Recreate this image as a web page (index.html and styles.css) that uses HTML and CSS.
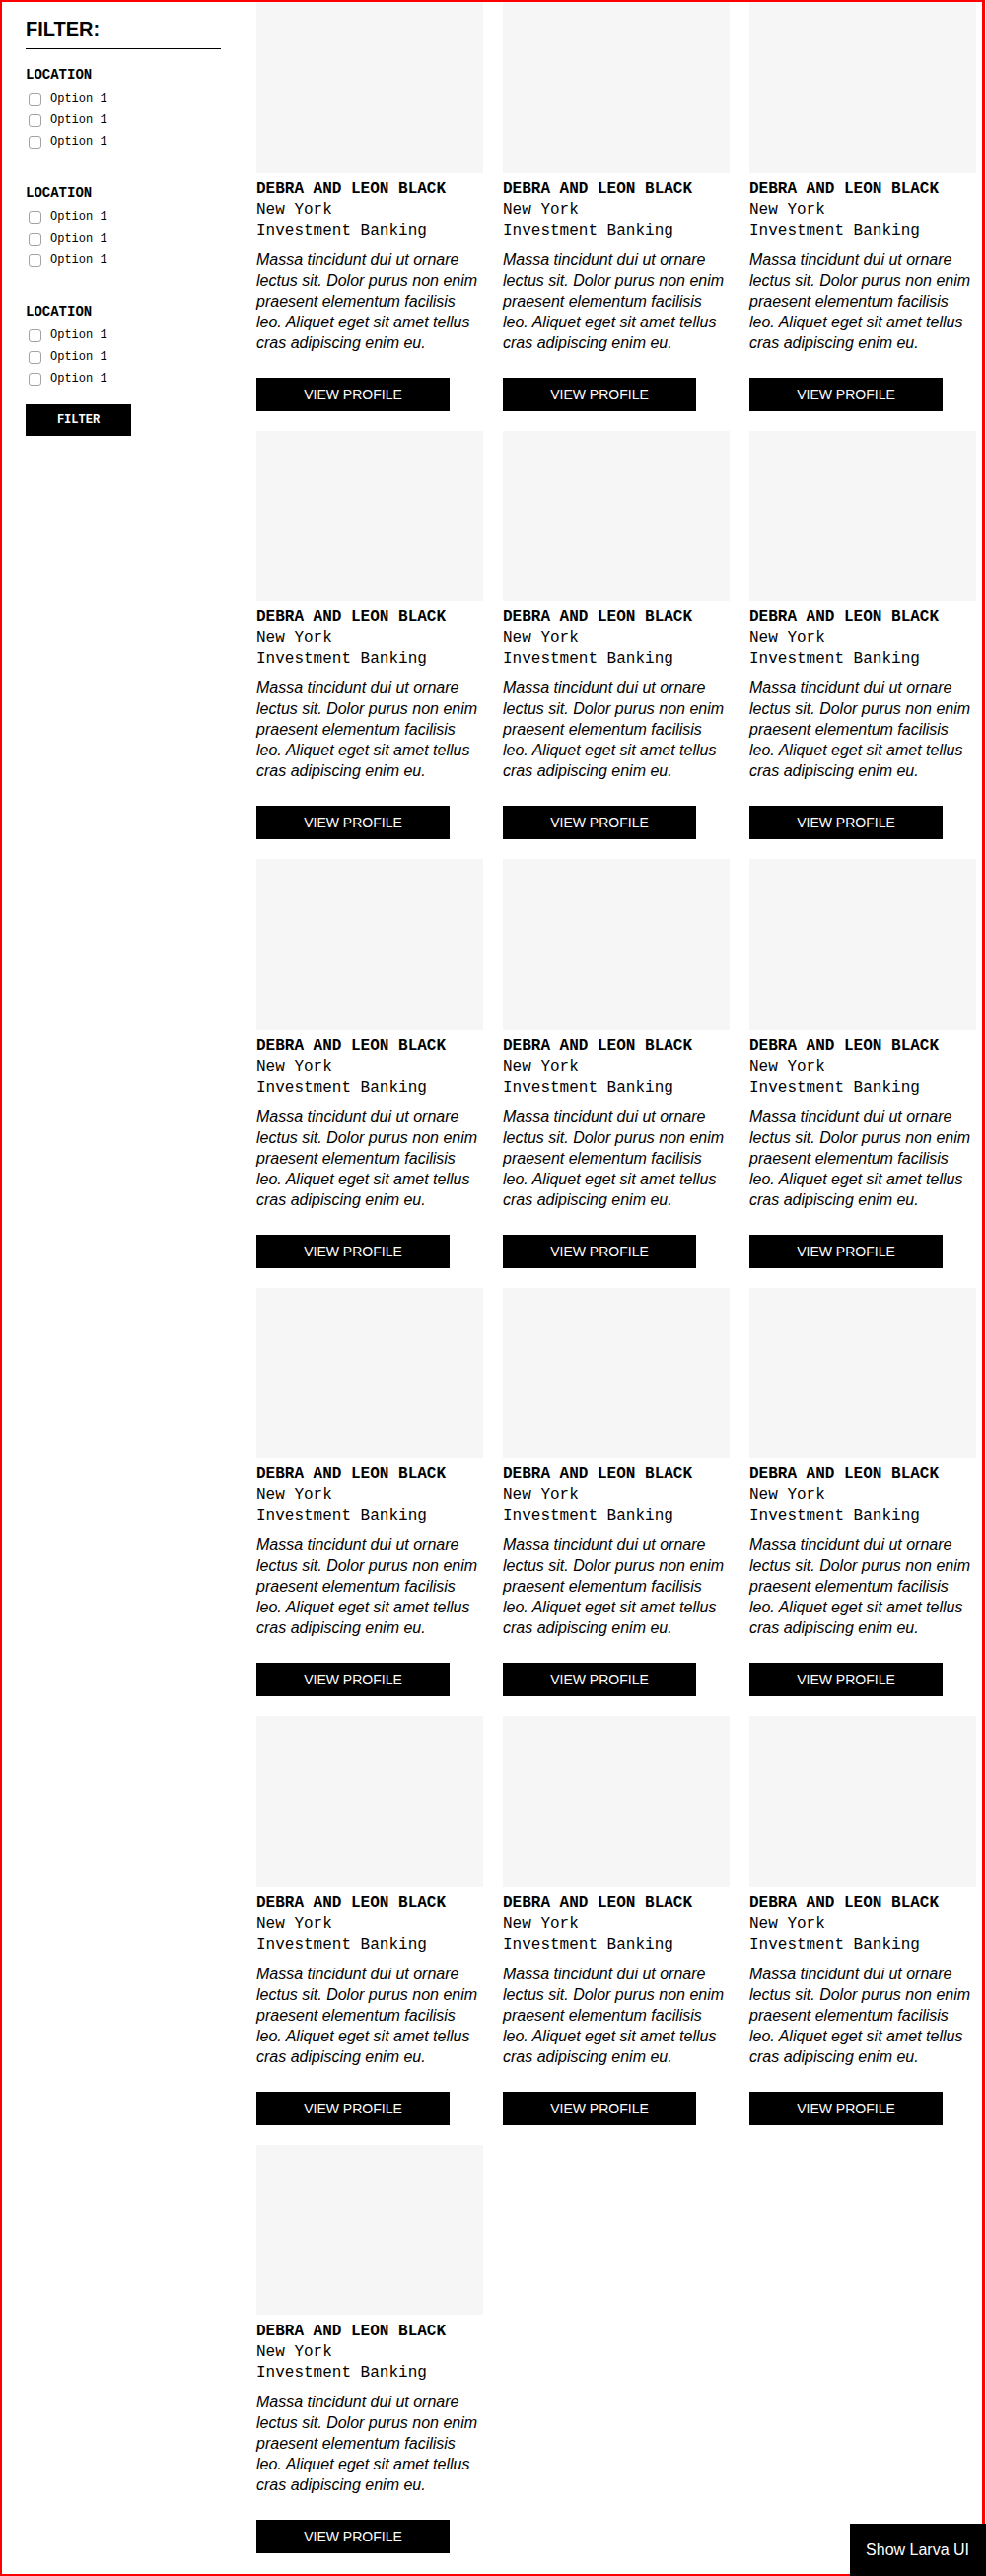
FILE: index.html
```html
<!DOCTYPE html>
<html lang="en">
<head>
<meta charset="utf-8">
<title>Profiles</title>
<link rel="stylesheet" href="styles.css">
</head>
<body>
<div class="page">
  <aside class="sidebar">
    <h2 class="sidebar-title">FILTER:</h2>
    <div class="group">
      <h3 class="group-title">LOCATION</h3>
      <label class="opt"><input type="checkbox" class="cb"><span>Option 1</span></label>
      <label class="opt"><input type="checkbox" class="cb"><span>Option 1</span></label>
      <label class="opt"><input type="checkbox" class="cb"><span>Option 1</span></label>
    </div>
    <div class="group">
      <h3 class="group-title">LOCATION</h3>
      <label class="opt"><input type="checkbox" class="cb"><span>Option 1</span></label>
      <label class="opt"><input type="checkbox" class="cb"><span>Option 1</span></label>
      <label class="opt"><input type="checkbox" class="cb"><span>Option 1</span></label>
    </div>
    <div class="group">
      <h3 class="group-title">LOCATION</h3>
      <label class="opt"><input type="checkbox" class="cb"><span>Option 1</span></label>
      <label class="opt"><input type="checkbox" class="cb"><span>Option 1</span></label>
      <label class="opt"><input type="checkbox" class="cb"><span>Option 1</span></label>
    </div>
    <button class="filter-btn" type="button">FILTER</button>
  </aside>

  <main class="grid">
    <article class="card"><div class="thumb"></div><h4 class="name">DEBRA AND LEON BLACK</h4><div class="meta">New York</div><div class="meta">Investment Banking</div><p class="desc">Massa tincidunt dui ut ornare lectus sit. Dolor purus non enim praesent elementum facilisis leo. Aliquet eget sit amet tellus cras adipiscing enim eu.</p><button class="profile-btn" type="button">VIEW PROFILE</button></article>
    <article class="card"><div class="thumb"></div><h4 class="name">DEBRA AND LEON BLACK</h4><div class="meta">New York</div><div class="meta">Investment Banking</div><p class="desc">Massa tincidunt dui ut ornare lectus sit. Dolor purus non enim praesent elementum facilisis leo. Aliquet eget sit amet tellus cras adipiscing enim eu.</p><button class="profile-btn" type="button">VIEW PROFILE</button></article>
    <article class="card"><div class="thumb"></div><h4 class="name">DEBRA AND LEON BLACK</h4><div class="meta">New York</div><div class="meta">Investment Banking</div><p class="desc">Massa tincidunt dui ut ornare lectus sit. Dolor purus non enim praesent elementum facilisis leo. Aliquet eget sit amet tellus cras adipiscing enim eu.</p><button class="profile-btn" type="button">VIEW PROFILE</button></article>
    <article class="card"><div class="thumb"></div><h4 class="name">DEBRA AND LEON BLACK</h4><div class="meta">New York</div><div class="meta">Investment Banking</div><p class="desc">Massa tincidunt dui ut ornare lectus sit. Dolor purus non enim praesent elementum facilisis leo. Aliquet eget sit amet tellus cras adipiscing enim eu.</p><button class="profile-btn" type="button">VIEW PROFILE</button></article>
    <article class="card"><div class="thumb"></div><h4 class="name">DEBRA AND LEON BLACK</h4><div class="meta">New York</div><div class="meta">Investment Banking</div><p class="desc">Massa tincidunt dui ut ornare lectus sit. Dolor purus non enim praesent elementum facilisis leo. Aliquet eget sit amet tellus cras adipiscing enim eu.</p><button class="profile-btn" type="button">VIEW PROFILE</button></article>
    <article class="card"><div class="thumb"></div><h4 class="name">DEBRA AND LEON BLACK</h4><div class="meta">New York</div><div class="meta">Investment Banking</div><p class="desc">Massa tincidunt dui ut ornare lectus sit. Dolor purus non enim praesent elementum facilisis leo. Aliquet eget sit amet tellus cras adipiscing enim eu.</p><button class="profile-btn" type="button">VIEW PROFILE</button></article>
    <article class="card"><div class="thumb"></div><h4 class="name">DEBRA AND LEON BLACK</h4><div class="meta">New York</div><div class="meta">Investment Banking</div><p class="desc">Massa tincidunt dui ut ornare lectus sit. Dolor purus non enim praesent elementum facilisis leo. Aliquet eget sit amet tellus cras adipiscing enim eu.</p><button class="profile-btn" type="button">VIEW PROFILE</button></article>
    <article class="card"><div class="thumb"></div><h4 class="name">DEBRA AND LEON BLACK</h4><div class="meta">New York</div><div class="meta">Investment Banking</div><p class="desc">Massa tincidunt dui ut ornare lectus sit. Dolor purus non enim praesent elementum facilisis leo. Aliquet eget sit amet tellus cras adipiscing enim eu.</p><button class="profile-btn" type="button">VIEW PROFILE</button></article>
    <article class="card"><div class="thumb"></div><h4 class="name">DEBRA AND LEON BLACK</h4><div class="meta">New York</div><div class="meta">Investment Banking</div><p class="desc">Massa tincidunt dui ut ornare lectus sit. Dolor purus non enim praesent elementum facilisis leo. Aliquet eget sit amet tellus cras adipiscing enim eu.</p><button class="profile-btn" type="button">VIEW PROFILE</button></article>
    <article class="card"><div class="thumb"></div><h4 class="name">DEBRA AND LEON BLACK</h4><div class="meta">New York</div><div class="meta">Investment Banking</div><p class="desc">Massa tincidunt dui ut ornare lectus sit. Dolor purus non enim praesent elementum facilisis leo. Aliquet eget sit amet tellus cras adipiscing enim eu.</p><button class="profile-btn" type="button">VIEW PROFILE</button></article>
    <article class="card"><div class="thumb"></div><h4 class="name">DEBRA AND LEON BLACK</h4><div class="meta">New York</div><div class="meta">Investment Banking</div><p class="desc">Massa tincidunt dui ut ornare lectus sit. Dolor purus non enim praesent elementum facilisis leo. Aliquet eget sit amet tellus cras adipiscing enim eu.</p><button class="profile-btn" type="button">VIEW PROFILE</button></article>
    <article class="card"><div class="thumb"></div><h4 class="name">DEBRA AND LEON BLACK</h4><div class="meta">New York</div><div class="meta">Investment Banking</div><p class="desc">Massa tincidunt dui ut ornare lectus sit. Dolor purus non enim praesent elementum facilisis leo. Aliquet eget sit amet tellus cras adipiscing enim eu.</p><button class="profile-btn" type="button">VIEW PROFILE</button></article>
    <article class="card"><div class="thumb"></div><h4 class="name">DEBRA AND LEON BLACK</h4><div class="meta">New York</div><div class="meta">Investment Banking</div><p class="desc">Massa tincidunt dui ut ornare lectus sit. Dolor purus non enim praesent elementum facilisis leo. Aliquet eget sit amet tellus cras adipiscing enim eu.</p><button class="profile-btn" type="button">VIEW PROFILE</button></article>
    <article class="card"><div class="thumb"></div><h4 class="name">DEBRA AND LEON BLACK</h4><div class="meta">New York</div><div class="meta">Investment Banking</div><p class="desc">Massa tincidunt dui ut ornare lectus sit. Dolor purus non enim praesent elementum facilisis leo. Aliquet eget sit amet tellus cras adipiscing enim eu.</p><button class="profile-btn" type="button">VIEW PROFILE</button></article>
    <article class="card"><div class="thumb"></div><h4 class="name">DEBRA AND LEON BLACK</h4><div class="meta">New York</div><div class="meta">Investment Banking</div><p class="desc">Massa tincidunt dui ut ornare lectus sit. Dolor purus non enim praesent elementum facilisis leo. Aliquet eget sit amet tellus cras adipiscing enim eu.</p><button class="profile-btn" type="button">VIEW PROFILE</button></article>
    <article class="card"><div class="thumb"></div><h4 class="name">DEBRA AND LEON BLACK</h4><div class="meta">New York</div><div class="meta">Investment Banking</div><p class="desc">Massa tincidunt dui ut ornare lectus sit. Dolor purus non enim praesent elementum facilisis leo. Aliquet eget sit amet tellus cras adipiscing enim eu.</p><button class="profile-btn" type="button">VIEW PROFILE</button></article>
  </main>
</div>
<button class="larva-btn" type="button">Show Larva UI</button>
</body>
</html>
```

FILE: styles.css
```css
* { box-sizing: border-box; }

html, body {
  margin: 0;
  padding: 0;
  background: #fff;
  overflow: hidden;
}

body {
  font-family: "Liberation Sans", Arial, sans-serif;
  color: #000;
}

.page {
  width: 999px;
  height: 2612px;
  display: flex;
  align-items: flex-start;
  border: 2px solid #ff0000;
  border-right-width: 3px;
  padding: 0 6px 0 24px;
}

/* Sidebar */
.sidebar {
  width: 198px;
  flex: 0 0 198px;
  margin-right: 36px;
  padding-top: 16px;
}

.sidebar-title {
  margin: 0;
  font-family: "Liberation Sans", Arial, sans-serif;
  font-weight: 700;
  font-size: 20px;
  line-height: 23px;
  padding-bottom: 8px;
  border-bottom: 1px solid #000;
}

.group {
  margin-top: 18px;
}
.group + .group {
  margin-top: 33px;
}

.group-title {
  margin: 0 0 4px;
  font-family: "Liberation Mono", "Courier New", monospace;
  font-weight: 700;
  font-size: 14px;
  line-height: 17px;
}

.opt {
  display: flex;
  align-items: center;
  height: 22px;
  font-family: "Liberation Mono", "Courier New", monospace;
  font-size: 12px;
  color: #000;
}

.cb {
  -webkit-appearance: none;
  appearance: none;
  width: 13px;
  height: 13px;
  margin: 0 9px 0 3px;
  border: 1px solid #a3a3a3;
  border-radius: 3px;
  background: #fff;
  flex: 0 0 13px;
}

.filter-btn {
  display: block;
  margin-top: 15px;
  width: 107px;
  height: 32px;
  border: 0;
  padding: 0;
  background: #000;
  color: #fff;
  font-family: "Liberation Mono", "Courier New", monospace;
  font-weight: 700;
  font-size: 12px;
}

/* Grid */
.grid {
  display: grid;
  grid-template-columns: repeat(3, 230px);
  column-gap: 20px;
  row-gap: 20px;
  width: 730px;
}

.card {
  display: flex;
  flex-direction: column;
  align-items: flex-start;
}

.thumb {
  width: 230px;
  height: 172.5px;
  background: #f6f6f6;
}

.name {
  margin: 7px 0 0;
  font-family: "Liberation Mono", "Courier New", monospace;
  font-weight: 700;
  font-size: 16px;
  line-height: 21px;
}

.meta {
  font-family: "Liberation Mono", "Courier New", monospace;
  font-size: 16px;
  line-height: 21px;
}

.desc {
  margin: 8px 0 0;
  width: 230px;
  font-family: "Liberation Sans", Arial, sans-serif;
  font-style: italic;
  font-size: 16px;
  line-height: 21px;
}

.profile-btn {
  margin-top: 25px;
  width: 196px;
  height: 34px;
  border: 0;
  padding: 0;
  background: #000;
  color: #fff;
  font-family: "Liberation Sans", Arial, sans-serif;
  font-size: 14px;
  line-height: 34px;
}

.larva-btn {
  position: fixed;
  right: 0;
  bottom: 0;
  border: 0;
  margin: 0;
  padding: 17px 17px 17px 16px;
  background: #000;
  color: #fff;
  font-family: "Liberation Sans", Arial, sans-serif;
  font-size: 16px;
  line-height: 19px;
}
```
